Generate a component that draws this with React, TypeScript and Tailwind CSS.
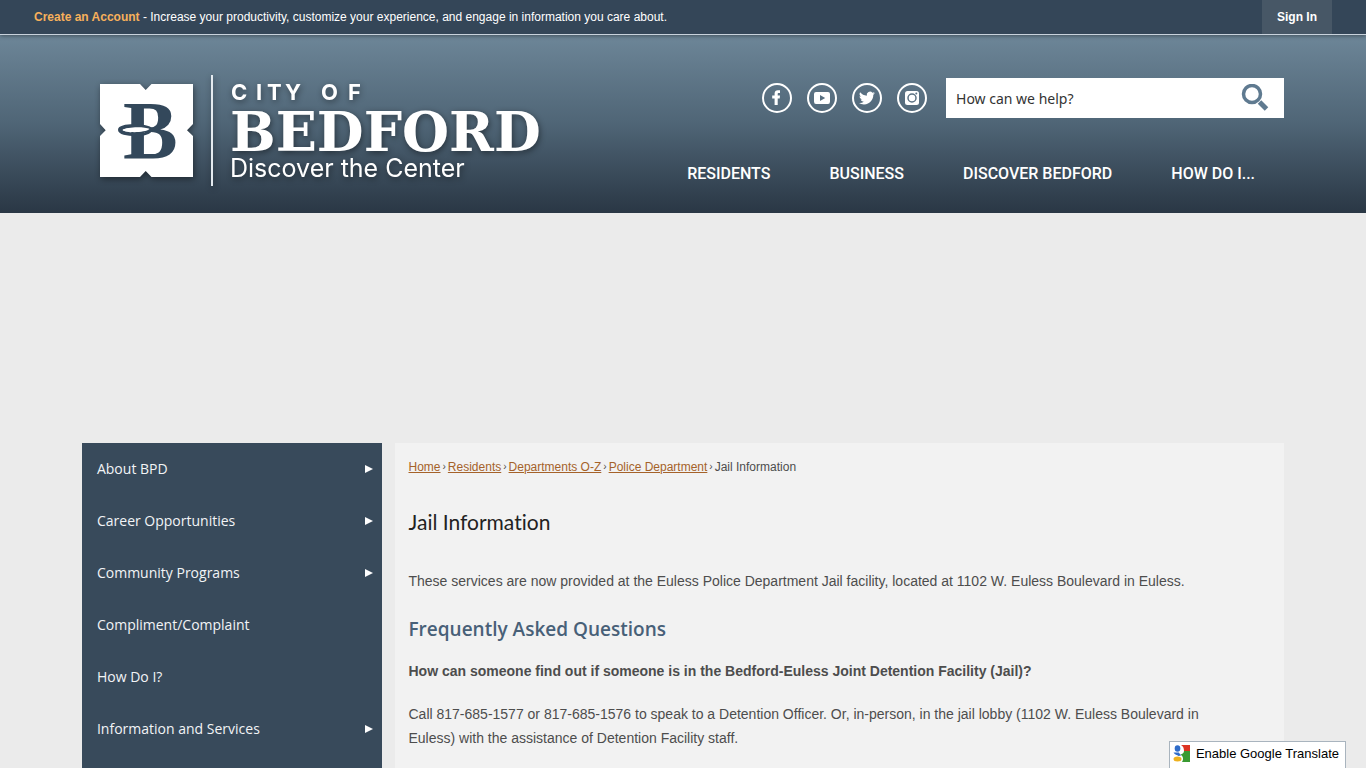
import React from 'react';

interface MenuItem {
  label: string;
  hasChildren: boolean;
}

const SIDE_MENU: MenuItem[] = [
  { label: 'About BPD', hasChildren: true },
  { label: 'Career Opportunities', hasChildren: true },
  { label: 'Community Programs', hasChildren: true },
  { label: 'Compliment/Complaint', hasChildren: false },
  { label: 'How Do I?', hasChildren: false },
  { label: 'Information and Services', hasChildren: true },
];

const MAIN_NAV = ['Residents', 'Business', 'Discover Bedford', 'How Do I...'];

const BREADCRUMBS = ['Home', 'Residents', 'Departments O-Z', 'Police Department'];

const Logo: React.FC = () => (
  <svg width="460" height="120" viewBox="90 70 460 120" role="img" aria-label="City of Bedford, Discover the Center" className="drop-shadow-[1px_2px_3px_rgba(0,0,0,0.45)]">
    <path
      fill="#fff"
      d="M100 84H140L145.7 90L151.5 84H193V124L187 130.3L193 136V177H151.5L145.7 171L140 177H100V136L105.7 130.3L100 124Z"
    />
    <text x="123" y="158" fontFamily="Liberation Serif, serif" fontWeight="700" fontSize="82" fill="#33485b">B</text>
    {/* Ring around the stem of the B */}
    <path d="M118 130C118 124.500 130 124 138 124.500C144 124.500 150 126 152 128L149 129.500C145 127.500 126 127 122.500 130C125 133 147 134 153 129.500C151 135 143 136 136 136C127 136 118 134.500 118 130Z" fill="#33485b" />
    <path d="M122.500 130C127 126.500 145 126.500 149.500 129C145 133 126 133 122.500 130Z" fill="#fff" />
    <path d="M211 75H213V186H211Z" fill="#e4eaef" />
    <text x="231 256 267 285 321 348" y="100" fontFamily="Inter, sans-serif" fontWeight="700" fontSize="22" fill="#fff">CITYOF</text>
    <text x="230" y="151" fontFamily="DejaVu Serif, serif" fontWeight="700" fontSize="54" fill="#fff">BEDFORD</text>
    <text x="230" y="177" fontFamily="Inter, sans-serif" fontWeight="400" fontSize="25" fill="#fff">Discover the Center</text>
  </svg>
);

const SocialLink: React.FC<{ label: string; children: React.ReactNode }> = ({ label, children }) => (
  <a href="#" aria-label={label} className="block">
    <svg width="30" height="30" viewBox="0 0 30 30" fill="#fff">
      <circle cx="15" cy="15" r="14" fill="none" stroke="#fff" strokeWidth="2" />
      {children}
    </svg>
  </a>
);

const SocialLinks: React.FC = () => (
  <div className="flex gap-[15px]">
    <SocialLink label="Facebook">
      <path d="M12.600 22V15.600H10.200V12.600H12.600V10.600C12.600 8.400 13.900 7.200 15.900 7.200H18V10H16.700C15.900 10 15.700 10.400 15.700 11V12.600H18L17.700 15.600H15.700V22Z" />
    </SocialLink>
    <SocialLink label="YouTube">
      <path fillRule="evenodd" d="M9 9H21Q23 9 23 11V18.500Q23 21 21 21H9Q7 21 7 18.500V11Q7 9 9 9ZM13 12V18L18.200 15Z" />
    </SocialLink>
    <SocialLink label="Twitter">
      <path d="M23 10.2c-.6.3-1.2.4-1.9.5.7-.4 1.2-1 1.4-1.8-.6.4-1.3.6-2.1.8a3.3 3.3 0 0 0-5.6 3c-2.7-.1-5.1-1.4-6.7-3.4a3.3 3.3 0 0 0 1 4.3c-.5 0-1-.2-1.5-.4 0 1.6 1.1 2.9 2.6 3.2-.5.1-1 .2-1.5.1.4 1.3 1.6 2.2 3.1 2.2A6.6 6.6 0 0 1 7 20c1.4.9 3.1 1.4 5 1.4 6 0 9.4-5 9.300-9.600.700-.4 1.200-1 1.700-1.600z" />
    </SocialLink>
    <SocialLink label="Instagram">
      <rect x="8" y="8" width="14" height="14" rx="2.500" />
      <circle cx="15" cy="15" r="4" fill="none" stroke="#5b7183" strokeWidth="1.500" />
      <circle cx="19.300" cy="10.500" r="1" fill="#5b7183" />
    </SocialLink>
  </div>
);

const SearchBox: React.FC = () => (
  <form className="flex h-10 w-[338px] items-center bg-white" onSubmit={(e) => e.preventDefault()}>
    <input
      type="text"
      aria-label="Search"
      placeholder="How can we help?"
      className="h-full min-w-0 flex-1 px-[10px] font-['Noto_Sans',sans-serif] text-sm text-[#333] outline-none placeholder:text-[#333]"
    />
    <button type="submit" aria-label="Submit search" className="flex h-10 w-[58px] items-center justify-center">
      <svg width="28" height="28" viewBox="0 0 28 28" fill="none" stroke="#5f7a90">
        <circle cx="11" cy="10" r="8.500" strokeWidth="3.500" />
        <path d="M18.500 18L25.500 25" strokeWidth="5" />
      </svg>
    </button>
  </form>
);

const TopBar: React.FC = () => (
  <div className="relative flex h-[35px] justify-between border-b border-[#c8d2dc] bg-[#344658] px-[34px] font-['Liberation_Sans',sans-serif] text-xs leading-[34px] text-white shadow-[0_1px_4px_rgba(0,0,0,0.4)]">
    <p>
      <a href="#" className="font-bold text-[#f7b05b]">Create an Account</a> - Increase your productivity, customize your experience, and engage in information you care about.
    </p>
    <a href="#" className="bg-[#475766] px-[15px] font-bold">Sign In</a>
  </div>
);

const Header: React.FC = () => (
  <header className="bg-linear-to-b from-[#6d8698] via-[#4f6576] to-[#2a3745]">
    <div className="mx-auto flex w-[88%] justify-between pb-[15px]">
      <a href="#" className="ml-2 mt-[35px] shrink-0">
        <Logo />
      </a>
      <div className="flex flex-col items-end pt-[43px]">
        <div className="flex items-center gap-[19px]">
          <SocialLinks />
          <SearchBox />
        </div>
        <nav className="mt-8 flex h-12 items-center gap-[59px] pr-[29px] font-['Roboto',sans-serif] text-base font-medium uppercase text-white">
          {MAIN_NAV.map((item) => (
            <a key={item} href="#">{item}</a>
          ))}
        </nav>
      </div>
    </div>
  </header>
);

const SideMenu: React.FC = () => (
  <nav className="w-[25%] bg-[#384a5b] font-['Open_Sans',sans-serif] text-sm font-medium text-[#f2f4f6]">
    <ul>
      {SIDE_MENU.map((item) => (
        <li key={item.label}>
          <a href="#" className="flex h-[52px] items-center justify-between pl-[15px] pr-[9px]">
            {item.label}
            {item.hasChildren && (
              <svg width="8" height="8" viewBox="0 0 8 8" fill="#fff">
                <path d="M0 0L8 4L0 8Z" />
              </svg>
            )}
          </a>
        </li>
      ))}
    </ul>
  </nav>
);

const JailInformation: React.FC = () => (
  <main className="w-[74%] bg-[#f2f2f2] pt-4 pr-10 pl-[14px] font-['Liberation_Sans',sans-serif] text-sm leading-6 text-[#4d4d4d]">
    <div className="flex gap-[2px] text-xs leading-4">
      {BREADCRUMBS.map((crumb) => (
        <React.Fragment key={crumb}>
          <a href="#" className="text-[#a5622a] underline">{crumb}</a>
          <span className="text-[10px]">›</span>
        </React.Fragment>
      ))}
      <span>Jail Information</span>
    </div>
    <h1 className="mt-[31px] font-['Lato',sans-serif] text-[21px] leading-8 text-[#222] [font-variant-ligatures:none]">Jail Information</h1>
    <p className="mt-[31px]">
      These services are now provided at the Euless Police Department Jail facility, located at 1102 W. Euless Boulevard in Euless.
    </p>
    <h2 className="mt-5 font-['Open_Sans',sans-serif] text-[19px] leading-8 font-semibold text-[#486078]">Frequently Asked Questions</h2>
    <p className="mt-[14px] font-bold">How can someone find out if someone is in the Bedford-Euless Joint Detention Facility (Jail)?</p>
    <p className="mt-[19px]">
      Call 817-685-1577 or 817-685-1576 to speak to a Detention Officer. Or, in-person, in the jail lobby (1102 W. Euless Boulevard in Euless) with the assistance of Detention Facility staff.
    </p>
  </main>
);

const TranslateButton: React.FC = () => (
  <button
    type="button"
    className="fixed right-5 bottom-0 flex h-[27px] items-center gap-[6px] border border-b-0 border-[#a9b4be] bg-white px-[3px] pr-[6px] pb-[3px] font-['Liberation_Sans',sans-serif] text-[13px] text-black"
  >
    <svg width="17" height="17" viewBox="0 0 17 17">
      <path d="M8 0H17V6H11C11 3 10 1 8 0Z" fill="#dd3322" />
      <path d="M11 6H17V17H9C11 14 10 11 7.500 9.500C9.500 9 11 8 11 6Z" fill="#3a9a32" />
      <ellipse cx="4.500" cy="3.500" rx="2.800" ry="3.300" fill="#2f6cc9" />
      <path d="M0.500 7.500C2 10 4 9.500 5.500 11L8 10.500C7.500 9 6 8.500 6 7.500Z" fill="#2f6cc9" />
      <ellipse cx="4.500" cy="14" rx="4" ry="2.500" fill="#eeb11e" />
    </svg>
    Enable Google Translate
  </button>
);

const App: React.FC = () => (
  <div className="flex min-h-screen flex-col bg-[#ebebeb]">
    <TopBar />
    <Header />
    <div className="mx-auto mt-[230px] flex w-[88%] flex-1 justify-between">
      <SideMenu />
      <JailInformation />
    </div>
    <TranslateButton />
  </div>
);

export default App;
